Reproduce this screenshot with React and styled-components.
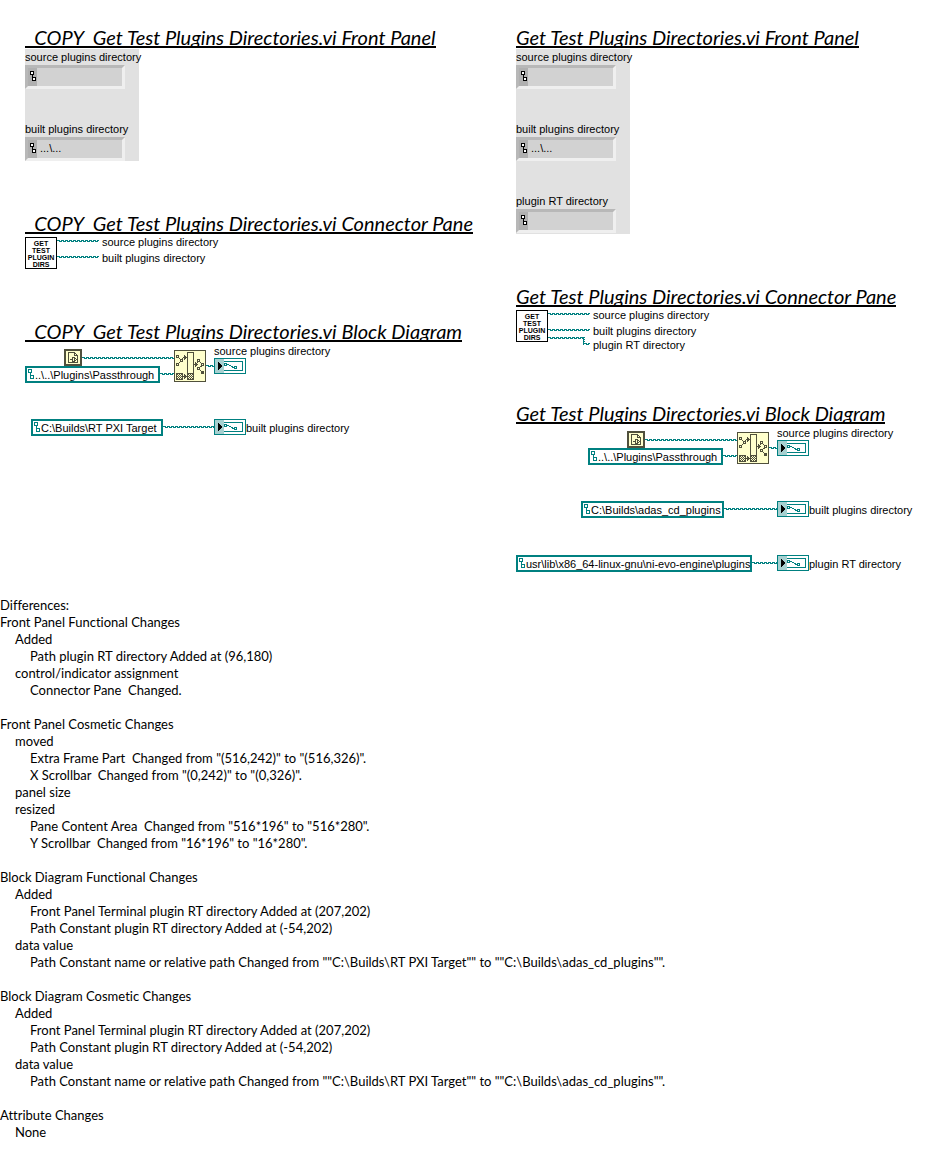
import React from "react";
import styled, { createGlobalStyle } from "styled-components";

const TEAL = "#008080";

const GlobalStyle = createGlobalStyle`
  *, *::before, *::after { box-sizing: border-box; }
  body {
    margin: 0;
    background: #ffffff;
    color: #000000;
    font-family: Lato, "Liberation Sans", sans-serif;
    font-variant-ligatures: none;
  }
`;

const Page = styled.main`
  padding-bottom: 32px;
`;

const Comparison = styled.div`
  display: grid;
  grid-template-columns: minmax(0, 491fr) minmax(0, 419fr);
  padding: 24px 0 0 25px;
`;

const Version = styled.article`
  display: flex;
  flex-direction: column;
  gap: 49px;
`;

const Section = styled.section`
  display: flex;
  flex-direction: column;
  align-items: flex-start;
  gap: ${(p) => p.$gap || 0}px;
`;

const Heading = styled.h2`
  height: 24px;
  margin: 0;
  overflow: hidden;
  border-bottom: 2px solid #000000;
  font-size: 20px;
  font-style: italic;
  font-weight: 400;
  line-height: 26px;
  white-space: pre;
`;

const Panel = styled.div`
  display: flex;
  flex-direction: column;
  gap: 32px;
  width: 114px;
  min-height: ${(p) => p.$minHeight}px;
  background: #e1e1e1;
`;

const Field = styled.label`
  display: block;
  font: 11px/16px "Liberation Sans", Arial, sans-serif;
  white-space: nowrap;
`;

const PathBox = styled.span`
  display: flex;
  width: 100px;
  height: 24px;
  border: 3px solid;
  border-color: #b8b8b8 #efefef #efefef #b8b8b8;
  background: #d2d2d2;
`;

const PathMark = styled.span`
  display: flex;
  align-items: flex-start;
  justify-content: center;
  width: 9px;
  padding-top: 3px;
  background: #b0b0b0;
`;

const PathInput = styled.input`
  flex: 1;
  min-width: 0;
  padding: 0 3px 2px;
  border: 0;
  outline: 0;
  background: transparent;
  font: inherit;
`;

const Canvas = styled.div`
  position: relative;
  width: 100%;
  height: ${(p) => p.$height}px;
`;

const Node = styled.div`
  position: absolute;
  left: ${(p) => p.$x}px;
  top: ${(p) => p.$y}px;
  display: flex;
`;

const Caption = styled.span`
  font: 11px/16px "Liberation Sans", Arial, sans-serif;
  white-space: nowrap;
`;

const Constant = styled.div`
  display: flex;
  align-items: flex-start;
  gap: 1px;
  width: ${(p) => p.$width}px;
  height: 17px;
  padding: 1px 0 0 1px;
  border: 2px solid ${TEAL};
  background: #ffffff;
  font: 11px/13px "Liberation Sans", Arial, sans-serif;
  white-space: nowrap;
`;

const ViIcon = styled.div`
  display: flex;
  flex-direction: column;
  align-items: center;
  width: 32px;
  height: 32px;
  padding-top: 2px;
  border: 1px solid #000000;
  background: #ffffff;
  font: 700 7px/7px "Liberation Sans", Arial, sans-serif;
`;

const Differences = styled.section`
  margin-top: 25px;
  font-size: 13px;
  line-height: 17px;
`;

const Group = styled.div`
  margin-bottom: 17px;
`;

const Line = styled.p`
  margin: 0;
  padding-left: ${(p) => p.$level * 15}px;
  white-space: pre-wrap;
`;

const Drawing = styled.svg`
  display: block;
  flex: none;
`;

function PathGlyph({ color = "#000000" }) {
  return (
    <Drawing width="6" height="10" shapeRendering="crispEdges" fill="#ffffff" stroke={color} aria-hidden="true">
      <path d="M.5 .5h3v3h-3z M2.5 4v3 M2.5 6.5h3v3h-3z" />
    </Drawing>
  );
}

function Wire({ x, y, length }) {
  let d = "";
  for (let i = 0; i < length; i += 4) {
    d += `M${i} .5h${Math.min(3, length - i)}`;
    if (length - i > 2) d += `M${i + 2} 1.5h${Math.min(3, length - i - 2)}`;
  }
  return (
    <Node $x={x} $y={y}>
      <Drawing width={length} height="2" shapeRendering="crispEdges" stroke={TEAL} aria-hidden="true">
        <path d={d} />
      </Drawing>
    </Node>
  );
}

function VerticalWire({ x, y, length }) {
  return (
    <Node $x={x} $y={y}>
      <Drawing width="2" height={length} shapeRendering="crispEdges" stroke={TEAL} aria-hidden="true">
        <path d={`M.5 0V${length}`} />
        <path d={`M1.5 0V${length}`} strokeDasharray="1 1" />
      </Drawing>
    </Node>
  );
}

function HomeDirectory() {
  return (
    <Drawing width="18" height="17" shapeRendering="crispEdges" aria-hidden="true">
      <path fill="#ffffcc" stroke="#50503c" strokeWidth="2" d="M1 1h16v15H1z" />
      <path fill="none" stroke="#50503c" d="M4.5 3.5h6l3 3v7h-9z M10.5 3.5v3h3 M6 10.5h2 M8.5 8.5h2v4h-2z M11 9.5h1 M11 11.5h1 M12 10.5h1" />
    </Drawing>
  );
}

function BuildPath() {
  return (
    <Drawing width="32" height="32" shapeRendering="crispEdges" aria-hidden="true">
      <path fill="#ffffcc" stroke="#50503c" d="M.5 .5h31v31H.5z" />
      <g fill="none" stroke="#50503c">
        <path d="M13.5 2.5h6v27h-6z" />
        <path d="M2.5 5.5h2v2h-2z M6.5 9.5h2v2h-2z M2.5 13.5h2v2h-2z" />
        <path d="M5 8l2 2 M5 13l2-2 M8 9l2-2 M9 7.5h3" />
        <path d="M23.5 9.5h2v2h-2z M27.5 13.5h2v2h-2z M23.5 17.5h2v2h-2z" />
        <path d="M20 14.5h3 M22 14l2-2 M26 12l2 2 M26 17l2-1 M26 20l2 2 M9 26.5h4" />
        <path d="M2.5 23.5h6v6h-6z M13.5 23.5h6v6h-6z" />
        <path strokeDasharray="1 1" d="M3 24.5h5 M4 25.5h4 M3 26.5h5 M4 27.5h4 M3 28.5h5 M14 24.5h5 M15 25.5h4 M14 26.5h5 M15 27.5h4 M14 28.5h5" />
      </g>
      <path fill="#50503c" d="M10 5h1v1h1v1h1v1h-1v1h-1v1h-1z M21 12h1v1h1v1h1v1h-1v1h-1v1h-1z M10 24h1v1h1v1h1v1h-1v1h-1v1h-1z M27 21h3v3h-3z" />
    </Drawing>
  );
}

function Terminal() {
  return (
    <Drawing width="32" height="16" shapeRendering="crispEdges" aria-hidden="true">
      <path fill="#ffffff" stroke={TEAL} d="M.5 .5h31v15H.5z M3.5 3.5h25v9h-25z" />
      <path fill="#a6d0d0" d="M1 1h9v14H1z" />
      <path fill="#000000" d="M4 4h1v1h1v1h1v1h1v2H7v1H6v1H5v1H4z" />
      <g fill="none" stroke={TEAL}>
        <path d="M10.5 5.5h2v2h-2z M20.5 8.5h2v2h-2z" />
        <path d="M13 6.5h2 M15 7.5h2 M17 8.5h2 M18 9.5h2" />
      </g>
    </Drawing>
  );
}

function FrontPanel({ fields, minHeight }) {
  return (
    <Panel $minHeight={minHeight}>
      {fields.map(([label, value]) => (
        <Field key={label}>
          {label}
          <PathBox>
            <PathMark><PathGlyph /></PathMark>
            <PathInput readOnly defaultValue={value} />
          </PathBox>
        </Field>
      ))}
    </Panel>
  );
}

function ConnectorPane({ withTarget }) {
  return (
    <Canvas $height={withTarget ? 41 : 32}>
      <Node $x={0} $y={0}>
        <ViIcon>
          <span>GET</span>
          <span>TEST</span>
          <span>PLUGIN</span>
          <span>DIRS</span>
        </ViIcon>
      </Node>
      <Wire x={32} y={3} length={42} />
      <Node $x={77} $y={-3}><Caption>source plugins directory</Caption></Node>
      <Wire x={32} y={19} length={42} />
      <Node $x={77} $y={13}><Caption>built plugins directory</Caption></Node>
      {withTarget && (
        <>
          <Wire x={32} y={27} length={36} />
          <VerticalWire x={67} y={27} length={8} />
          <Wire x={68} y={33} length={6} />
          <Node $x={77} $y={27}><Caption>plugin RT directory</Caption></Node>
        </>
      )}
    </Canvas>
  );
}

function PathConstant({ x, y, width, value }) {
  return (
    <Node $x={x} $y={y}>
      <Constant $width={width}>
        <PathGlyph color={TEAL} />
        <span>{value}</span>
      </Constant>
    </Node>
  );
}

function BlockDiagram({ shift, height, rows }) {
  const end = 189 + shift;
  return (
    <Canvas $height={height}>
      <Node $x={39 + shift} $y={7}><HomeDirectory /></Node>
      <Wire x={57 + shift} y={15} length={92} />
      <PathConstant x={shift} y={24} width={135} value="..\..\Plugins\Passthrough" />
      <Wire x={135 + shift} y={31} length={14} />
      <Node $x={149 + shift} $y={8}><BuildPath /></Node>
      <Wire x={181 + shift} y={23} length={8} />
      <Node $x={end} $y={1}><Caption>source plugins directory</Caption></Node>
      <Node $x={end} $y={16}><Terminal /></Node>
      {rows.map((r) => (
        <React.Fragment key={r.label}>
          <PathConstant x={r.x} y={r.y} width={r.width} value={r.value} />
          <Wire x={r.x + r.width} y={r.y + 7} length={end - r.x - r.width} />
          <Node $x={end} $y={r.y}><Terminal /></Node>
          <Node $x={end + 32} $y={r.y + 1}><Caption>{r.label}</Caption></Node>
        </React.Fragment>
      ))}
    </Canvas>
  );
}

const oldFields = [
  ["source plugins directory", ""],
  ["built plugins directory", "...\\..."],
];

const newFields = [...oldFields, ["plugin RT directory", ""]];

const oldRows = [
  { x: 6, y: 77, width: 132, value: "C:\\Builds\\RT PXI Target", label: "built plugins directory" },
];

const newRows = [
  { x: 65, y: 77, width: 143, value: "C:\\Builds\\adas_cd_plugins", label: "built plugins directory" },
  { x: 0, y: 131, width: 236, value: "usr\\lib\\x86_64-linux-gnu\\ni-evo-engine\\plugins", label: "plugin RT directory" },
];

const diagramChanges = [
  [1, "Added"],
  [2, "Front Panel Terminal plugin RT directory Added at (207,202)"],
  [2, "Path Constant plugin RT directory Added at (-54,202)"],
  [1, "data value"],
  [2, 'Path Constant name or relative path Changed from ""C:\\Builds\\RT PXI Target"" to ""C:\\Builds\\adas_cd_plugins"".'],
];

const groups = [
  [
    [0, "Differences:"],
    [0, "Front Panel Functional Changes"],
    [1, "Added"],
    [2, "Path plugin RT directory Added at (96,180)"],
    [1, "control/indicator assignment"],
    [2, "Connector Pane  Changed."],
  ],
  [
    [0, "Front Panel Cosmetic Changes"],
    [1, "moved"],
    [2, 'Extra Frame Part  Changed from "(516,242)" to "(516,326)".'],
    [2, 'X Scrollbar  Changed from "(0,242)" to "(0,326)".'],
    [1, "panel size"],
    [1, "resized"],
    [2, 'Pane Content Area  Changed from "516*196" to "516*280".'],
    [2, 'Y Scrollbar  Changed from "16*196" to "16*280".'],
  ],
  [[0, "Block Diagram Functional Changes"], ...diagramChanges],
  [[0, "Block Diagram Cosmetic Changes"], ...diagramChanges],
  [
    [0, "Attribute Changes"],
    [1, "None"],
  ],
];

function VersionColumn({ name, fields, panelHeight, withTarget, shift, diagramHeight, rows }) {
  return (
    <Version>
      <Section $gap={1}>
        <Heading>{name} Front Panel</Heading>
        <FrontPanel fields={fields} minHeight={panelHeight} />
      </Section>
      <Section $gap={3}>
        <Heading>{name} Connector Pane</Heading>
        <ConnectorPane withTarget={withTarget} />
      </Section>
      <Section>
        <Heading>{name} Block Diagram</Heading>
        <BlockDiagram shift={shift} height={diagramHeight} rows={rows} />
      </Section>
    </Version>
  );
}

export default function App() {
  return (
    <>
      <GlobalStyle />
      <Page>
        <Comparison>
          <VersionColumn
            name="  COPY  Get Test Plugins Directories.vi"
            fields={oldFields}
            panelHeight={112}
            shift={0}
            diagramHeight={94}
            rows={oldRows}
          />
          <VersionColumn
            name="Get Test Plugins Directories.vi"
            fields={newFields}
            panelHeight={185}
            withTarget
            shift={72}
            diagramHeight={148}
            rows={newRows}
          />
        </Comparison>
        <Differences>
          {groups.map((lines, g) => (
            <Group key={g}>
              {lines.map(([level, text], i) => (
                <Line key={i} $level={level}>{text}</Line>
              ))}
            </Group>
          ))}
        </Differences>
      </Page>
    </>
  );
}
